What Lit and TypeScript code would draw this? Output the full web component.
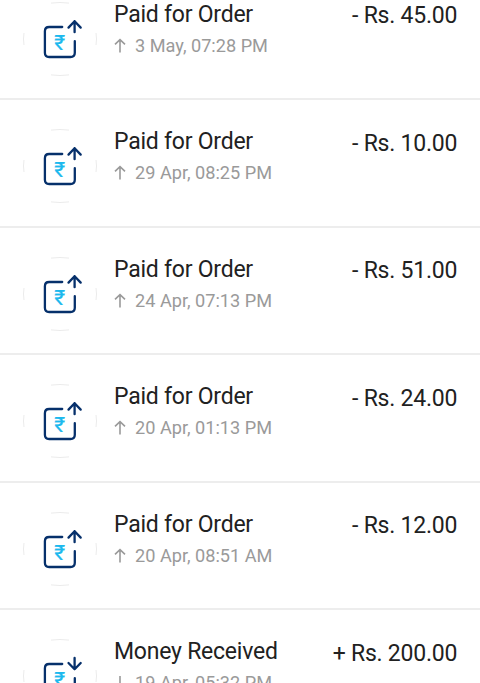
import { LitElement, html, css, svg } from "lit";
import { customElement, property } from "lit/decorators.js";

interface Transaction {
  title: string;
  date: string;
  amount: string;
  incoming?: boolean;
}

const TRANSACTIONS: Transaction[] = [
  { title: "Paid for Order", date: "3 May, 07:28 PM", amount: "- Rs. 45.00" },
  { title: "Paid for Order", date: "29 Apr, 08:25 PM", amount: "- Rs. 10.00" },
  { title: "Paid for Order", date: "24 Apr, 07:13 PM", amount: "- Rs. 51.00" },
  { title: "Paid for Order", date: "20 Apr, 01:13 PM", amount: "- Rs. 24.00" },
  { title: "Paid for Order", date: "20 Apr, 08:51 AM", amount: "- Rs. 12.00" },
  { title: "Money Received", date: "19 Apr, 05:32 PM", amount: "+ Rs. 200.00", incoming: true },
];

@customElement("transaction-row")
class TransactionRow extends LitElement {
  @property({ attribute: false }) item!: Transaction;

  static styles = css`
    :host {
      display: flex;
      box-sizing: border-box;
      height: 127.5px;
      padding: 29px 23px 0;
      border-bottom: 2px solid #ededed;
      color: #212121;
    }
    .badge {
      flex: none;
      width: 74px;
      height: 74px;
    }
    .line {
      fill: none;
      stroke: #06306b;
      stroke-width: 2.3;
      stroke-linecap: round;
      stroke-linejoin: round;
    }
    .rim {
      fill: none;
      stroke: #ebebeb;
      stroke-width: 1;
    }
    .rupee {
      fill: #1cb9ee;
      font: 400 21px Roboto, sans-serif;
      stroke: #1cb9ee;
      stroke-width: 0.2;
      text-anchor: middle;
    }
    .details {
      flex: 1;
      margin-left: 17px;
    }
    .title,
    .amount {
      font-size: 23px;
      line-height: 26px;
      letter-spacing: -0.23px;
      white-space: pre;
    }
    .title {
      margin-top: 0.4px;
    }
    .meta {
      display: flex;
      align-items: center;
      margin-top: 7px;
      font-size: 18.15px;
      line-height: 22px;
      color: #9a9a9a;
    }
    .arrow {
      width: 12px;
      height: 16px;
      margin-right: 9px;
      fill: none;
      stroke: #9a9a9a;
      stroke-width: 1.6;
    }
    .amount {
      margin: 1.6px -0.2px 0 0;
    }
  `;

  render() {
    const { title, date, amount, incoming } = this.item;
    return html`
      <svg class="badge" viewBox="0 0 74 74">
        <path class="rim" d="M28 1.1Q37 -.1 46 1.1M28 72.9Q37 74.1 46 72.9M1 31Q0 37 1 43M73 31Q74 37 73 43" />
        <path class="line" d="M39.2 25H26.2Q21.9 25 21.9 29.3V50.7Q21.9 55 26.2 55H47.5Q51.8 55 51.8 50.7V39.2" />
        ${incoming
          ? svg`<path class="line" d="M51.6 19V30.2M45.5 24L51.6 30.2L57.7 24" />`
          : svg`<path class="line" d="M51.6 30.2V19.2M45.5 25.6L51.6 19.2L57.7 25.6" />`}
        <text class="rupee" x="36.8" y="48.3">₹</text>
      </svg>
      <div class="details">
        <div class="title">${title}</div>
        <div class="meta">
          <svg class="arrow" viewBox="0 0 12 16">
            <path d=${incoming ? "M6 1V13.5M1 9L6 13.8L11 9" : "M6 14.5V1.8M1 6.4L6 1.6L11 6.4"} />
          </svg>
          <span>${date}</span>
        </div>
      </div>
      <div class="amount">${amount}</div>
    `;
  }
}

@customElement("app-root")
class AppRoot extends LitElement {
  static styles = css`
    :host {
      display: block;
      height: 683px;
      overflow: hidden;
      background: #fff;
      font-family: Roboto, sans-serif;
    }
    .list {
      margin-top: -27.5px;
    }
  `;

  render() {
    return html`<div class="list">
      ${TRANSACTIONS.map((t) => html`<transaction-row .item=${t}></transaction-row>`)}
    </div>`;
  }
}
